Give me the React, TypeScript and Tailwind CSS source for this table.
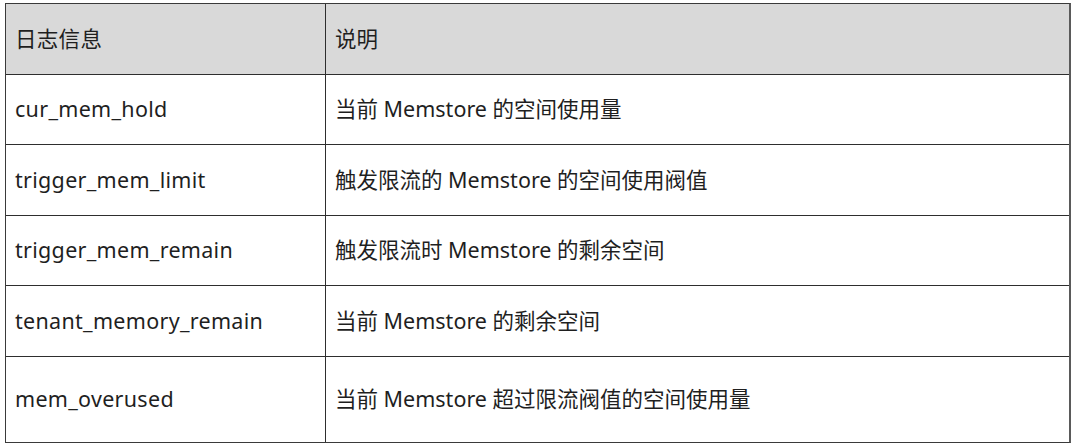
const rows: { key: string; desc: string; h: string }[] = [
  { key: "cur_mem_hold", desc: "当前 Memstore 的空间使用量", h: "h-[70px]" },
  { key: "trigger_mem_limit", desc: "触发限流的 Memstore 的空间使用阀值", h: "h-[71px]" },
  { key: "trigger_mem_remain", desc: "触发限流时 Memstore 的剩余空间", h: "h-[70px]" },
  { key: "tenant_memory_remain", desc: "当前 Memstore 的剩余空间", h: "h-[71px]" },
  { key: "mem_overused", desc: "当前 Memstore 超过限流阀值的空间使用量", h: "h-[85px]" },
]

function Row({ left, right, h, head, last }: { left: string; right: string; h: string; head?: boolean; last?: boolean }) {
  return (
    <div className={`flex ${h} ${last ? "" : "border-b border-[#2e2e2e]"} ${head ? "bg-[#d9d9d9]" : "bg-white"}`}>
      <div className="w-[320px] flex-none flex items-center pl-[9px] tracking-[0.3px] border-r border-[#2e2e2e]">{left}</div>
      <div className="flex-1 flex items-center pl-[9px]">{right}</div>
    </div>
  )
}

export default function App() {
  return (
    <div
      className="w-[1080px] h-[446px] bg-white pt-[3px] pl-[5px] text-[21.5px] text-[#1f1f1f]"
      style={{ fontFamily: '"Noto Sans", "Noto Sans CJK SC", sans-serif' }}
    >
      <div className="w-[1066px] border border-[#3a3a3a] border-r-2 border-r-[#5a5a5a]">
        <Row left="日志信息" right="说明" h="h-[71px]" head />
        {rows.map((r, i) => (
          <Row key={r.key} left={r.key} right={r.desc} h={r.h} last={i === rows.length - 1} />
        ))}
      </div>
    </div>
  )
}
